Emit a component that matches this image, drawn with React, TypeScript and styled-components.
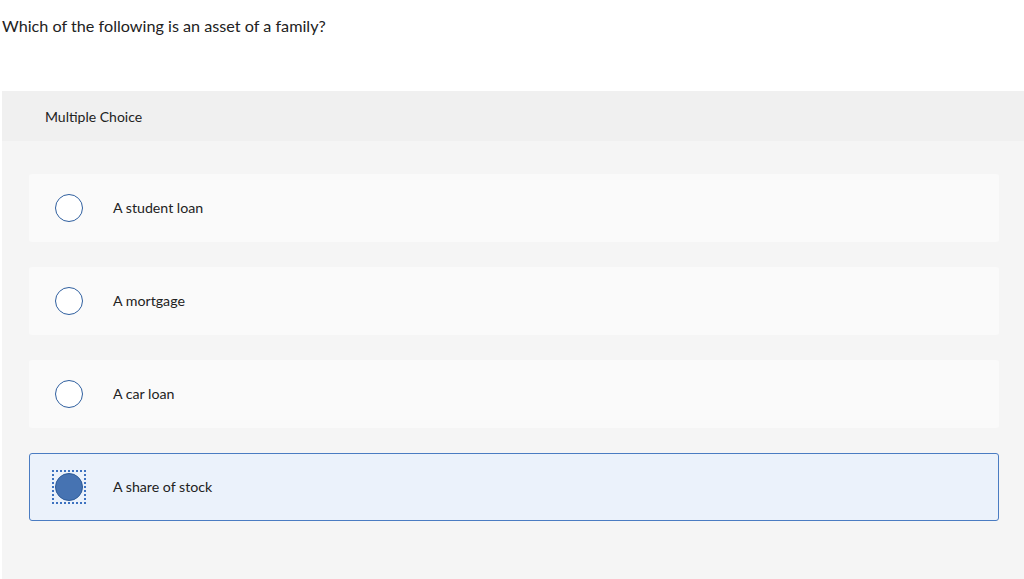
import React, { FC, useState } from "react";
import styled, { createGlobalStyle } from "styled-components";

const GlobalStyle = createGlobalStyle`
    html, body {
        margin: 0;
        padding: 0;
        background: #ffffff;
    }
    body {
        font-family: "Lato", "Liberation Sans", sans-serif;
        color: #1f1f1f;
    }
`;

const options = ["A student loan", "A mortgage", "A car loan", "A share of stock"];

type OptionProps = {
    label: string;
    selected: boolean;
    onSelect: () => void;
};

const Option: FC<OptionProps> = ({ label, selected, onSelect }) => (
    <OptionRow $selected={selected} onClick={onSelect}>
        <RadioHolder $focused={selected}>
            <Radio $checked={selected} />
        </RadioHolder>
        <OptionLabel>{label}</OptionLabel>
    </OptionRow>
);

const App: FC = () => {
    const [picked, setPicked] = useState(3);
    return (
        <>
            <GlobalStyle />
            <Page>
                <Question>Which of the following is an asset of a family?</Question>
                <Panel>
                    <PanelHeading>Multiple Choice</PanelHeading>
                    <OptionList>
                        {options.map((option, i) => (
                            <Option
                                key={option}
                                label={option}
                                selected={picked === i}
                                onSelect={() => setPicked(i)}
                            />
                        ))}
                    </OptionList>
                </Panel>
            </Page>
        </>
    );
};

export default App;

const Page = styled.div`
    height: 579px;
    overflow: hidden;
    display: flex;
    flex-direction: column;
`;

const Question = styled.p`
    margin: 0;
    padding: 16px 0 0 2px;
    height: 91px;
    flex-shrink: 0;
    box-sizing: border-box;
    font-size: 16.2px;
    line-height: 20px;
    color: #222;
`;

const Panel = styled.section`
    flex: 1;
    margin-left: 2px;
    background: #f5f5f5;
`;

const PanelHeading = styled.div`
    height: 50px;
    display: flex;
    align-items: center;
    padding-left: 43px;
    background: #f0f0f0;
    font-size: 14px;
    color: #222;
`;

const OptionList = styled.div`
    display: flex;
    flex-direction: column;
    gap: 25.5px;
    padding: 33px 25px 0 27px;
`;

const OptionRow = styled.div<{ $selected: boolean }>`
    height: 67.5px;
    box-sizing: border-box;
    display: flex;
    align-items: center;
    border-radius: 3px;
    cursor: pointer;
    padding-left: ${(p) => (p.$selected ? "22px" : "23px")};
    background: ${(p) => (p.$selected ? "#ebf2fb" : "#fafafa")};
    border: ${(p) => (p.$selected ? "1px solid #4a7cc2" : "none")};
`;

const RadioHolder = styled.span<{ $focused: boolean }>`
    width: 34px;
    height: 34px;
    box-sizing: border-box;
    display: flex;
    align-items: center;
    justify-content: center;
    border: 2px dotted ${(p) => (p.$focused ? "#3d72c0" : "transparent")};
`;

const Radio = styled.span<{ $checked: boolean }>`
    width: 28px;
    height: 28px;
    box-sizing: border-box;
    border-radius: 50%;
    border: 1px solid ${(p) => (p.$checked ? "#2d5b99" : "#2f5f9f")};
    background: ${(p) => (p.$checked ? "#4673b2" : "#ffffff")};
`;

const OptionLabel = styled.span`
    margin-left: 27px;
    font-size: 14.2px;
    color: #222;
`;
